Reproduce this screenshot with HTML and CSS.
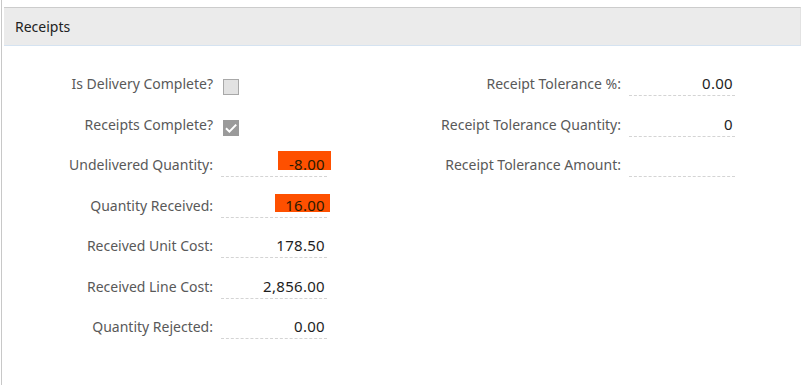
FILE: index.html
```html
<!DOCTYPE html>
<html lang="en">
<head>
    <meta charset="UTF-8">
    <meta name="viewport" content="width=device-width, initial-scale=1.0">
    <title>Receipts</title>
    <link rel="stylesheet" href="styles.css">
</head>
<body>
    <div class="panel">
        <header class="panel-header">Receipts</header>

        <div class="form">
            <div class="col col-left">
                <label class="lbl">Is Delivery Complete?</label>
                <div class="check-cell"><span class="check"></span></div>

                <label class="lbl">Receipts Complete?</label>
                <div class="check-cell">
                    <span class="check checked">
                        <svg width="16" height="16" viewBox="0 0 16 16"><path d="M3 8.3 L6.4 11.6 L13.2 4.6" fill="none" stroke="#fff" stroke-width="2"/></svg>
                    </span>
                </div>

                <label class="lbl">Undelivered Quantity:</label>
                <div class="field"><span class="mark mark-a"></span><span class="val">-8.00</span></div>

                <label class="lbl">Quantity Received:</label>
                <div class="field"><span class="mark mark-b"></span><span class="val">16.00</span></div>

                <label class="lbl">Received Unit Cost:</label>
                <div class="field"><span class="val">178.50</span></div>

                <label class="lbl">Received Line Cost:</label>
                <div class="field"><span class="val">2,856.00</span></div>

                <label class="lbl">Quantity Rejected:</label>
                <div class="field"><span class="val">0.00</span></div>
            </div>

            <div class="col col-right">
                <label class="lbl">Receipt Tolerance %:</label>
                <div class="field"><span class="val">0.00</span></div>

                <label class="lbl">Receipt Tolerance Quantity:</label>
                <div class="field"><span class="val">0</span></div>

                <label class="lbl">Receipt Tolerance Amount:</label>
                <div class="field"><span class="val"></span></div>
            </div>
        </div>
    </div>
</body>
</html>
```

FILE: styles.css
```css
body {
    margin: 0;
    padding: 0;
    background: #fff;
    font-family: "Noto Sans", Arial, sans-serif;
    font-size: 14px;
    color: #222;
}

.panel {
    margin-left: 1px;
    padding: 7px 0 0 2px;
    min-height: 378px;
    border-left: 1px solid #c8c8c8;
}

.panel-header {
    height: 37px;
    line-height: 37px;
    padding-left: 11px;
    background-color: #ebebeb;
    border-top: 1px solid #cccccc;
    border-bottom: 1px solid #d5e3f1;
    border-right: 1px solid #e2e2e2;
    color: #222;
}

.form {
    display: flex;
    padding-top: 9.5px;
}

.col {
    display: grid;
    grid-auto-rows: 40.5px;
    column-gap: 8px;
    align-items: end;
}

.col-left {
    grid-template-columns: 209px 106px;
}

.col-right {
    grid-template-columns: 221px 106px;
    margin-left: 73px;
}

.lbl {
    line-height: 24px;
    margin-bottom: 0;
    text-align: right;
    color: #595959;
    white-space: nowrap;
}

.field {
    position: relative;
    height: 24px;
    line-height: 24px;
    padding-right: 2px;
    text-align: right;
    border-bottom: 1px dashed #d4d4d4;
}

.val {
    position: relative;
    font-size: 15px;
    letter-spacing: 0.3px;
    color: #1e1e1e;
}

.mark {
    position: absolute;
    background-color: #fe5000;
}

.mark-a {
    left: 57px;
    top: -1px;
    width: 53px;
    height: 19px;
}

.mark-b {
    left: 54px;
    top: 1px;
    width: 55px;
    height: 18px;
}

.mark + .val {
    color: #2a1a00;
}

.check-cell {
    height: 16px;
    margin-bottom: 1px;
    padding-left: 2px;
}

.check {
    display: block;
    box-sizing: border-box;
    width: 16px;
    height: 16px;
    background-color: #e2e2e2;
    border: 1px solid #a8a8a8;
}

.check.checked {
    background-color: #9a9a9a;
    border-color: #9a9a9a;
}

.check svg {
    display: block;
    margin: -1px;
}
```
